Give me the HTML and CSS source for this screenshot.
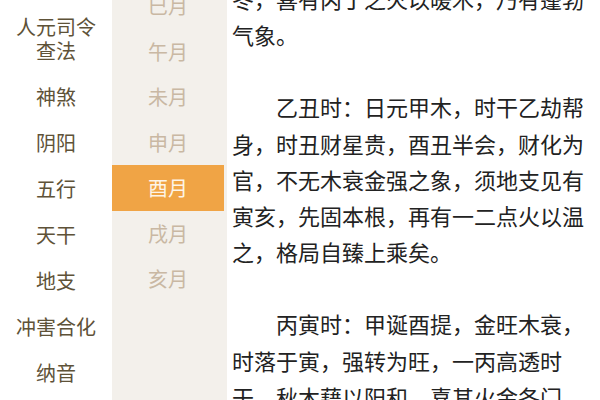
FILE: index.html
```html
<!DOCTYPE html>
<html lang="zh">
<head>
<meta charset="utf-8">
<link rel="stylesheet" href="styles.css">
</head>
<body>
<div class="page">
  <nav class="cats">
    <div class="cat">人元司令<br>查法</div>
    <div class="cat">神煞</div>
    <div class="cat">阴阳</div>
    <div class="cat">五行</div>
    <div class="cat">天干</div>
    <div class="cat">地支</div>
    <div class="cat">冲害合化</div>
    <div class="cat">纳音</div>
  </nav>
  <nav class="months">
    <div class="month">巳月</div>
    <div class="month">午月</div>
    <div class="month">未月</div>
    <div class="month">申月</div>
    <div class="month active">酉月</div>
    <div class="month">戌月</div>
    <div class="month">亥月</div>
  </nav>
  <main class="article">
    <div class="scroll">
      <p class="cont">冬，喜有丙丁之火以暖木，乃有蓬勃气象。</p>
      <p>乙丑时：日元甲木，时干乙劫帮身，时丑财星贵，酉丑半会，财化为官，不无木衰金强之象，须地支见有寅亥，先固本根，再有一二点火以温之，格局自臻上乘矣。</p>
      <p>丙寅时：甲诞酉提，金旺木衰，时落于寅，强转为旺，一丙高透时干，秋木藉以阳和，喜其火金各门</p>
    </div>
  </main>
</div>
</body>
</html>
```

FILE: styles.css
```css
* { box-sizing: border-box; }
html, body {
  margin: 0;
  padding: 0;
  width: 600px;
  height: 400px;
  overflow: hidden;
  background: #ffffff;
  font-family: "Noto Sans CJK SC", "Noto Sans", sans-serif;
}
.page {
  display: flex;
  width: 600px;
  height: 400px;
  overflow: hidden;
}
.cats {
  width: 112px;
  flex: none;
  padding-top: 4px;
  background: #ffffff;
}
.cat {
  padding: 11px 0;
  font-size: 20px;
  line-height: 24px;
  text-align: center;
  color: #5e5238;
}
.months {
  width: 115px;
  flex: none;
  padding-right: 3px;
  background: #f3f0eb;
  margin-top: -17px;
}
.month {
  height: 45.5px;
  display: flex;
  align-items: center;
  justify-content: center;
  font-size: 20px;
  color: #c9b8a3;
}
.month.active {
  background: #f0a445;
  color: #fdf4e8;
}
.article {
  flex: 1;
  padding: 0 16px 0 5px;
  overflow: hidden;
}
.scroll {
  margin-top: -20px;
}
.article p {
  margin: 0 0 36px 0;
  font-size: 22px;
  line-height: 36.2px;
  color: #222222;
  text-indent: 2em;
}
.article p.cont {
  text-indent: 0;
}
```
